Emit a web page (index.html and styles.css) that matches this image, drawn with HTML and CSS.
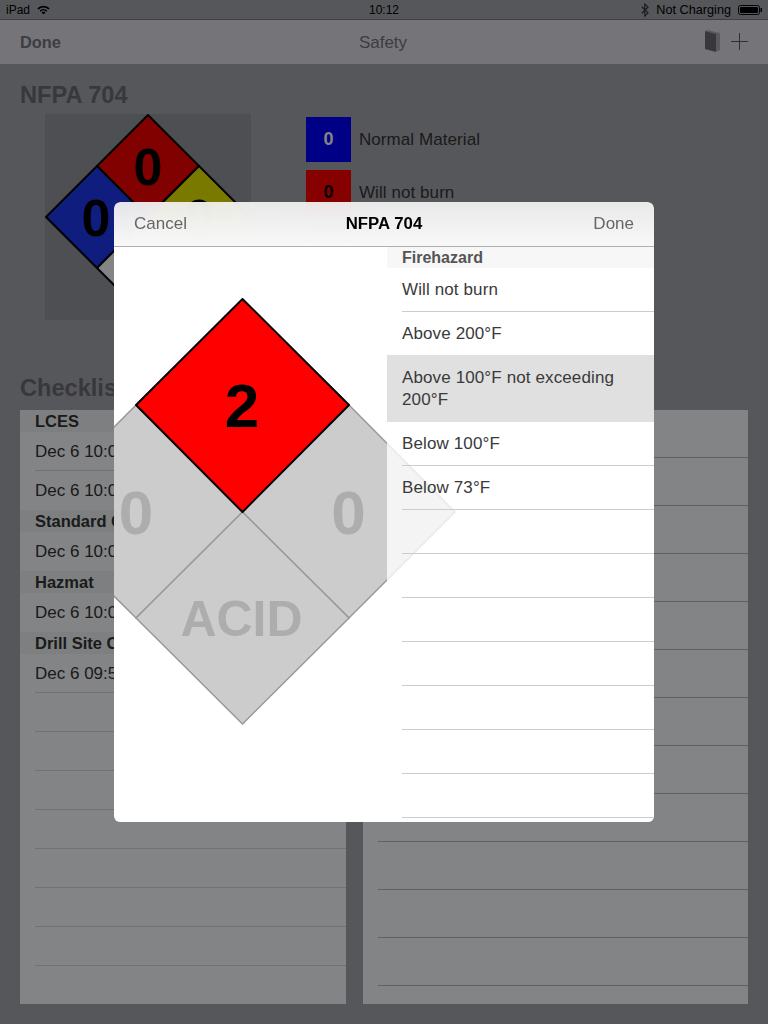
FILE: index.html
```html
<!DOCTYPE html>
<html lang="en">
<head>
    <meta charset="UTF-8">
    <title>Safety</title>
    <link rel="stylesheet" href="styles.css">
</head>
<body>
<div id="app">
    <div class="status_bar">
        <div class="status_left">
            <span>iPad</span>
            <svg class="wifi" width="13" height="10" viewBox="0 0 13 10">
                <path d="M0.3 3.3 A8.6 8.6 0 0 1 12.7 3.3 L11.4 4.6 A6.8 6.8 0 0 0 1.6 4.6 Z" fill="#000"/>
                <path d="M2.6 5.5 A5.5 5.5 0 0 1 10.4 5.5 L9.2 6.7 A3.8 3.8 0 0 0 3.8 6.7 Z" fill="#000"/>
                <path d="M4.6 7.5 A2.7 2.7 0 0 1 8.4 7.5 L6.5 9.6 Z" fill="#000"/>
            </svg>
        </div>
        <div class="status_time">10:12</div>
        <div class="status_right">
            <svg class="bluetooth" width="8" height="14" viewBox="0 0 8 14">
                <path d="M0.8 3.8 L7 9.8 L3.8 13 V1 L7 4.2 L0.8 10.2" fill="none" stroke="#1c1c20" stroke-width="1.2"/>
            </svg>
            <span class="charging">Not Charging</span>
            <svg width="24" height="10" viewBox="0 0 24 10">
                <rect x="0.5" y="0.5" width="21" height="9" rx="2" fill="none" stroke="#000"/>
                <rect x="2" y="2" width="18" height="6" rx="1" fill="#000"/>
                <rect x="22.5" y="3" width="1.5" height="4" fill="#000"/>
            </svg>
        </div>
    </div>

    <div class="nav_bar">
        <div class="nav_done">Done</div>
        <div class="nav_title">Safety</div>
        <div class="nav_icons">
            <svg width="16" height="22" viewBox="0 0 16 22">
                <path d="M2 0 L15 3 V20 L11 22 V4 L0 1 Z" fill="#a9aab1"/>
                <path d="M0 1 L11 4 V22 L0 19 Z" fill="#6a6b72"/>
            </svg>
            <svg width="17" height="17" viewBox="0 0 17 17">
                <path d="M8.5 0 V17 M0 8.5 H17" stroke="#5c5d64" stroke-width="1" fill="none"/>
            </svg>
        </div>
    </div>

    <div class="content">
        <h2 class="first_heading">NFPA 704</h2>
        <div class="nfpa_row">
            <div class="nfpa_box">
                <svg width="206" height="206" viewBox="0 0 206 206">
                    <g stroke="#000" stroke-width="2" stroke-linejoin="round">
                        <polygon points="103,1 154,52 103,103 52,52" fill="#f40000"/>
                        <polygon points="52,52 103,103 52,154 1,103" fill="#1e38f0"/>
                        <polygon points="154,52 205,103 154,154 103,103" fill="#e4e400"/>
                        <polygon points="103,103 154,154 103,205 52,154" fill="#f8f9fd"/>
                    </g>
                    <g class="back_digit">
                        <text x="103" y="71">0</text>
                        <text x="51" y="122">0</text>
                        <text x="154" y="122">0</text>
                    </g>
                </svg>
            </div>
            <div class="legend">
                <div class="legend_row">
                    <div class="swatch swatch_blue">0</div>
                    <span>Normal Material</span>
                </div>
                <div class="legend_row">
                    <div class="swatch swatch_red">0</div>
                    <span>Will not burn</span>
                </div>
            </div>
        </div>

        <h2 class="second_heading">Checklists</h2>
        <div class="panels">
            <div class="panel panel_left">
                <div class="section">LCES</div>
                <div class="row"><span class="line">Dec 6 10:02 AM</span></div>
                <div class="row"><span class="line no_line">Dec 6 10:01 AM</span></div>
                <div class="section">Standard Orders</div>
                <div class="row"><span class="line no_line">Dec 6 10:00 AM</span></div>
                <div class="section">Hazmat</div>
                <div class="row"><span class="line no_line">Dec 6 10:00 AM</span></div>
                <div class="section">Drill Site Checklist</div>
                <div class="row"><span class="line">Dec 6 09:58 AM</span></div>
                <div class="row"><span class="line"></span></div>
                <div class="row"><span class="line"></span></div>
                <div class="row"><span class="line"></span></div>
                <div class="row"><span class="line"></span></div>
                <div class="row"><span class="line"></span></div>
                <div class="row"><span class="line"></span></div>
                <div class="row"><span class="line"></span></div>
                <div class="row"><span class="line"></span></div>
            </div>
            <div class="panel panel_right">
                <div class="row_big"><span class="line"></span></div>
                <div class="row_big"><span class="line"></span></div>
                <div class="row_big"><span class="line"></span></div>
                <div class="row_big"><span class="line"></span></div>
                <div class="row_big"><span class="line"></span></div>
                <div class="row_big"><span class="line"></span></div>
                <div class="row_big"><span class="line"></span></div>
                <div class="row_big"><span class="line"></span></div>
                <div class="row_big"><span class="line"></span></div>
                <div class="row_big"><span class="line"></span></div>
                <div class="row_big"><span class="line"></span></div>
                <div class="row_big"><span class="line"></span></div>
            </div>
        </div>
    </div>

    <div class="dim">
        <div class="modal">
            <div class="modal_header">
                <span class="modal_button">Cancel</span>
                <span class="modal_title">NFPA 704</span>
                <span class="modal_button">Done</span>
            </div>
            <div class="modal_body">
                <svg class="big_diamond" width="540" height="575" viewBox="0 0 540 575">
                    <g fill="#ccc" stroke="#999" stroke-width="1.5">
                        <polygon points="22,158 128.5,265 22,371 -84.5,265"/>
                        <polygon points="235,158 341,265 235,371 128.5,265"/>
                        <polygon points="128.5,265 235,371 128.5,477 22,371"/>
                    </g>
                    <polygon points="128.5,52 235,158 128.5,265 22,158" fill="#f00" stroke="#000" stroke-width="2" stroke-linejoin="round"/>
                    <g class="big_digit">
                        <text x="128" y="180" fill="#000">2</text>
                        <text x="22" y="287" fill="#adadad">0</text>
                        <text x="234.5" y="287" fill="#adadad">0</text>
                        <text class="acid" x="127.5" y="389" fill="#adadad">ACID</text>
                    </g>
                </svg>
                <div class="picker">
                    <div class="picker_section">Firehazard</div>
                    <div class="pick"><span class="pick_text">Will not burn</span></div>
                    <div class="pick pick_short"><span class="pick_text">Above 200°F</span></div>
                    <div class="pick_selected">Above 100°F not exceeding 200°F</div>
                    <div class="pick"><span class="pick_text">Below 100°F</span></div>
                    <div class="pick"><span class="pick_text">Below 73°F</span></div>
                    <div class="pick"><span class="pick_text"></span></div>
                    <div class="pick"><span class="pick_text"></span></div>
                    <div class="pick"><span class="pick_text"></span></div>
                    <div class="pick"><span class="pick_text"></span></div>
                    <div class="pick"><span class="pick_text"></span></div>
                    <div class="pick"><span class="pick_text"></span></div>
                    <div class="pick"><span class="pick_text"></span></div>
                    <div class="pick"><span class="pick_text"></span></div>
                </div>
            </div>
        </div>
    </div>
</div>
</body>
</html>
```

FILE: styles.css
```css
html, body {
    margin: 0;
    padding: 0;
    height: 1024px;
    overflow: hidden;
}

body {
    font-family: "Liberation Sans", Arial, sans-serif;
    background: #a3a4aa;
    color: #333;
}

#app {
    position: relative;
    width: 768px;
    height: 1024px;
    overflow: hidden;
}

.status_bar {
    display: flex;
    justify-content: space-between;
    align-items: center;
    position: relative;
    box-sizing: border-box;
    height: 20px;
    padding: 0 6px;
    background: #a3a4aa;
    border-bottom: 1px solid #77787e;
    font-size: 12px;
    color: #000;
}

.status_left {
    display: flex;
    align-items: center;
    gap: 7px;
}

.status_time {
    position: absolute;
    left: 0;
    right: 0;
    text-align: center;
}

.status_right {
    display: flex;
    align-items: center;
    gap: 6px;
    z-index: 1;
}

.bluetooth {
    flex-shrink: 0;
    margin-right: 1px;
}

.charging {
    margin-right: 1px;
    font-size: 12.7px;
}

.nav_bar {
    display: flex;
    justify-content: space-between;
    align-items: center;
    position: relative;
    box-sizing: border-box;
    height: 44px;
    padding: 0 20px;
    background: #dddee4;
    font-size: 17px;
    color: #72737a;
}

.nav_done {
    padding-top: 1px;
    font-weight: bold;
    font-size: 16.4px;
}

.nav_title {
    position: absolute;
    left: 0;
    right: 0;
    padding: 1px 2px 0 0;
    text-align: center;
}

.nav_icons {
    display: flex;
    align-items: center;
    gap: 10px;
    margin-top: -2px;
}

.content {
    padding: 16px 20px 0 20px;
}

h2 {
    margin: 0;
    font-size: 23.6px;
    line-height: 30px;
    font-weight: bold;
    color: #6a6b72;
}

.first_heading {
    margin-bottom: 4px;
}

.second_heading {
    margin-top: 53px;
    margin-bottom: 7px;
}

.nfpa_row {
    display: flex;
    align-items: flex-start;
    gap: 55px;
    margin-left: 25px;
}

.nfpa_box {
    width: 206px;
    height: 206px;
    background: #94959c;
}

.nfpa_box svg {
    display: block;
}

.back_digit text {
    font-size: 52px;
    font-weight: bold;
    text-anchor: middle;
    fill: #000;
}

.legend {
    display: flex;
    flex-direction: column;
    gap: 8px;
    padding-top: 3px;
    font-size: 17px;
    letter-spacing: 0.07px;
}

.legend_row {
    display: flex;
    align-items: center;
    gap: 8px;
}

.swatch {
    width: 45px;
    height: 45px;
    line-height: 45px;
    text-align: center;
    font-size: 18px;
    font-weight: bold;
}

.swatch_blue {
    background: #0000ff;
    color: #f8f9fd;
}

.swatch_red {
    background: #ff0000;
    color: #000;
}

.panels {
    display: flex;
    gap: 17px;
    height: 594px;
}

.panel {
    background: #f8f9fd;
    overflow: hidden;
}

.panel_left {
    width: 326px;
}

.panel_right {
    width: 385px;
}

.section {
    box-sizing: border-box;
    height: 22px;
    padding-left: 15px;
    background: #eff0f4;
    font-size: 16.5px;
    line-height: 22px;
    font-weight: bold;
    white-space: nowrap;
}

.row {
    height: 39px;
    padding-left: 15px;
    font-size: 17px;
}

.row_big {
    height: 48px;
    padding-left: 15px;
}

.line {
    display: block;
    box-sizing: border-box;
    height: 100%;
    line-height: 40px;
    border-bottom: 1px solid #d4d5d9;
}

.row_big .line {
    border-bottom-color: #b4b5b9;
}

.no_line {
    border-bottom: none;
}

.dim {
    position: absolute;
    top: 0;
    left: 0;
    right: 0;
    bottom: 0;
    display: flex;
    align-items: center;
    justify-content: center;
    background: rgba(0, 0, 0, 0.47);
}

.modal {
    width: 540px;
    height: 620px;
    border-radius: 6px;
    overflow: hidden;
}

.modal_header {
    display: flex;
    justify-content: space-between;
    align-items: center;
    position: relative;
    box-sizing: border-box;
    height: 45px;
    padding: 0 20px;
    background: linear-gradient(rgba(246, 246, 246, 0.92), #f8f8f8);
    backdrop-filter: blur(16px);
    border-bottom: 1px solid #b0b0b0;
    font-size: 17px;
}

.modal_button {
    color: #666;
}

.modal_title {
    position: absolute;
    left: 0;
    right: 0;
    text-align: center;
    font-size: 16.8px;
    font-weight: bold;
    color: #000;
}

.modal_body {
    position: relative;
    height: 575px;
    background: #fff;
    overflow: hidden;
}

.big_diamond {
    position: absolute;
    top: 0;
    left: 0;
}

.big_digit text {
    font-size: 62px;
    font-weight: bold;
    text-anchor: middle;
}

.big_digit .acid {
    font-size: 50px;
}

.picker {
    position: relative;
    margin-left: 273px;
    height: 575px;
    background: rgba(255, 255, 255, 0.78);
    font-size: 17px;
    letter-spacing: 0.12px;
    color: #3a3a3a;
}

.picker_section {
    box-sizing: border-box;
    height: 21px;
    padding-left: 15px;
    background: #f7f7f7;
    font-size: 16px;
    line-height: 21px;
    font-weight: bold;
    letter-spacing: 0;
    color: #555;
}

.pick {
    height: 44px;
    padding-left: 15px;
}

.pick_text {
    display: block;
    box-sizing: border-box;
    height: 100%;
    line-height: 43px;
    border-bottom: 1px solid #ccc;
}

.pick_short {
    height: 43px;
}

.pick_short .pick_text {
    border-bottom: none;
}

.pick_selected {
    box-sizing: border-box;
    height: 67px;
    padding: 12px 20px 0 15px;
    line-height: 22px;
    background: #e0e0e0;
}
```
